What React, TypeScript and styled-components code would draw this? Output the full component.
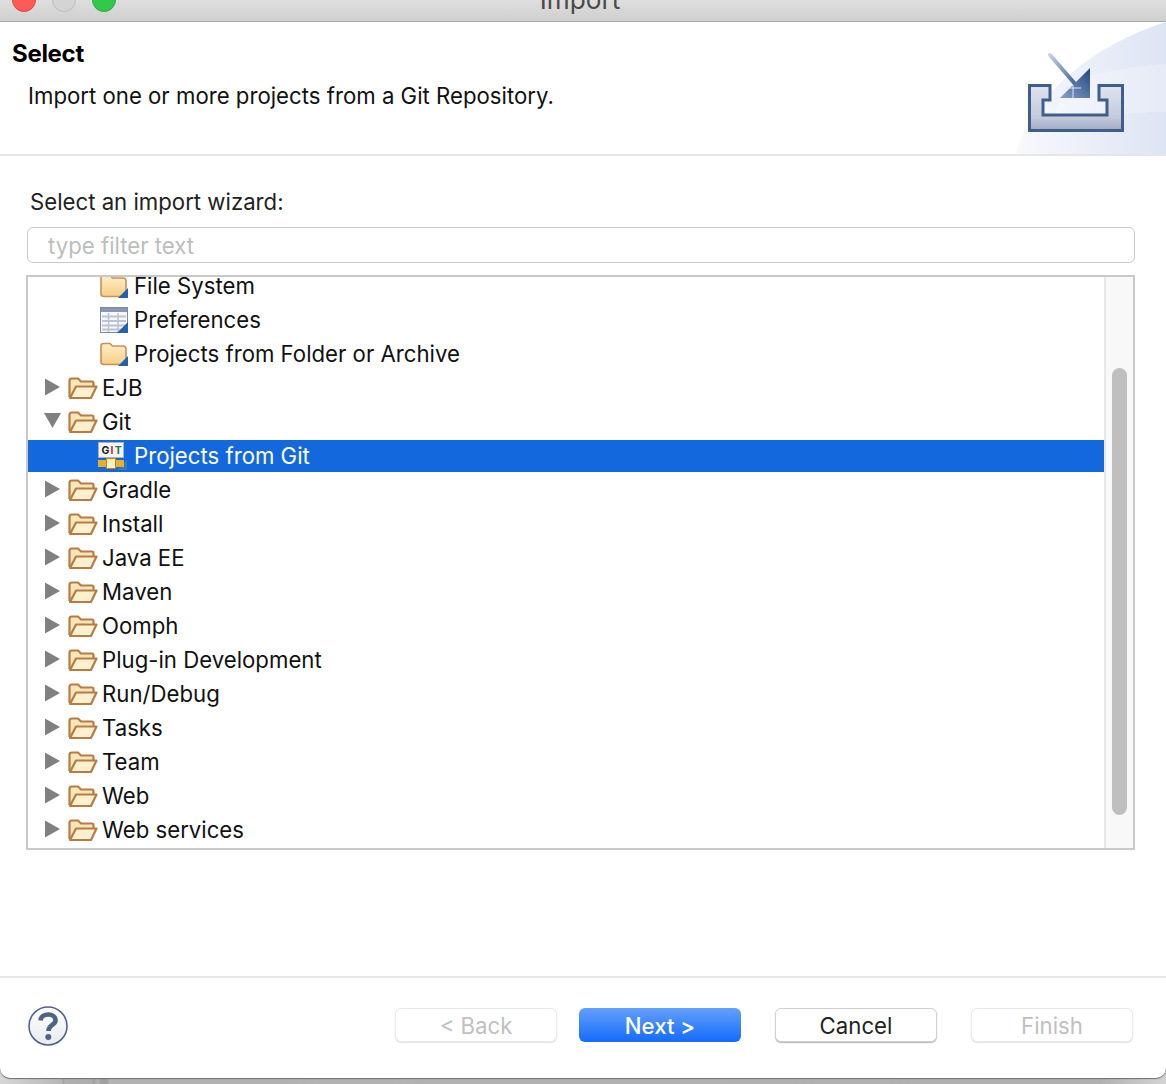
import React from "react";
import styled, { createGlobalStyle } from "styled-components";

const Global = createGlobalStyle`
  html, body { margin: 0; padding: 0; }
  body { font-family: Inter, "Liberation Sans", sans-serif; }
  #root { width: 1166px; height: 1084px; overflow: hidden; }
`;
const Desk = styled.div`
  width: 1166px; height: 1084px; overflow: hidden;
  background: linear-gradient(90deg, #d6d6d6 0, #b6b6b6 62px, #a2a2a2 63px, #b0b0b0 65px, #adadad 92px, #a0a0a0 93px, #b4b4b4 99px, #a0a0a0 100px, #a0a0a0 108px, #b2b2b2 109px, #b0b0b0 1100px, #d4d4d4 1166px);
`;
const Win = styled.div`
  height: 1078px; background: #fff; border-radius: 0 0 10px 10px; overflow: hidden;
  display: flex; flex-direction: column; box-shadow: 0 1px 1px #6e6e6e;
`;
const TitleBar = styled.div`
  flex: none; height: 22px; box-sizing: border-box; overflow: hidden;
  background: linear-gradient(#dedede, #cfcfcf);
  border-bottom: 1px solid #a9a9a9;
  display: grid; grid-template-columns: 1fr auto 1fr; grid-template-rows: 21px; align-items: end;
`;
const Lights = styled.div`
  display: flex; gap: 16px; padding-left: 12px; margin-bottom: 9px;
`;
const Light = styled.span<{ $c: string; $b: string }>`
  width: 24px; height: 24px; border-radius: 50%; box-sizing: border-box;
  background: ${(p) => p.$c}; border: 1px solid ${(p) => p.$b};
`;
const Title = styled.div`
  font-size: 26.2px; line-height: 26px; color: #4a4a4a; margin-bottom: 8px; padding-right: 6px;
`;
const Header = styled.div`
  flex: none; height: 134px; position: relative; overflow: hidden; box-sizing: border-box;
  border-bottom: 2px solid #e6e6e6; padding: 17px 12px 0;
`;
const Banner = styled.svg`
  position: absolute; right: 0; top: 0;
`;
const WizIcon = styled.svg`
  position: absolute; left: 1026px; top: 30px;
`;
const HeadTitle = styled.div`
  font-size: 24px; line-height: 30px; font-weight: 700; color: #000; letter-spacing: -0.3px;
`;
const HeadDesc = styled.div`
  font-size: 22.2px; line-height: 28px; color: #111; margin: 13px 0 0 16px;
`;
const Main = styled.div`
  flex: 1; display: flex; flex-direction: column; padding: 32px 31px 0 27px; min-height: 0;
`;
const Label = styled.div`
  font-size: 22.2px; line-height: 28px; color: #222; padding-left: 3px;
`;
const Filter = styled.input`
  display: block; width: 100%; height: 36px; box-sizing: border-box; margin-top: 11px;
  border: 1px solid #c9c9c9; border-radius: 6px; padding: 0 20px; outline: none;
  font: 22.2px Inter, sans-serif; background: #fff;
  &::placeholder { color: #bdbdbd; opacity: 1; }
`;
const TreeBox = styled.div`
  margin: 12px 0 0 -1px; width: 1109px; height: 575px; box-sizing: border-box;
  border: 2px solid #c9c9c9; display: flex; overflow: hidden;
`;
const TreeList = styled.div`
  flex: 1; min-width: 0; margin-top: -8px;
`;
const Row = styled.div`
  height: 34px; display: flex; align-items: center; box-sizing: border-box;
  font-size: 22.2px; color: #111; padding-bottom: 2px;
`;
const ChildRow = styled(Row)`
  padding-left: 72px;
`;
const SelectedRow = styled(Row)`
  height: 32px; margin: 1px 0; background: #1268dc; padding-left: 70px; color: #fff;
`;
const Twist = styled.svg`
  flex: none; width: 20px; height: 18px; margin: 0 5px 0 15px;
`;
const IconBox = styled.svg<{ $gap: number }>`
  flex: none; margin: 2px ${(p) => p.$gap}px 0 0;
`;
const Track = styled.div`
  flex: none; width: 29px; box-sizing: border-box; background: #f8f8f8;
  border-left: 2px solid #e8e8e8; padding: 91px 6px 0 6px;
`;
const Thumb = styled.div`
  height: 447px; border-radius: 8px; background: #bfbfbf;
`;
const Footer = styled.div`
  flex: none; height: 102px; box-sizing: border-box; border-top: 2px solid #e6e6e6;
  display: flex; align-items: flex-start; padding: 30px 33px 0 28px;
`;
const Help = styled.svg`
  flex: none; margin-right: auto; margin-top: -2px;
`;
const Btn = styled.div<{ $kind: "off" | "main" | "plain"; $gap: number }>`
  flex: none; width: 162px; height: 34px; box-sizing: border-box; margin-left: ${(p) => p.$gap}px;
  border-radius: 6px; display: flex; align-items: center; justify-content: center;
  font-size: 22.2px;
  ${(p) =>
    p.$kind === "main"
      ? "background: linear-gradient(#64a0fb, #146bfb); color: #fff; font-weight: 500;"
      : p.$kind === "plain"
      ? "background: #fff; color: #222; border: 1px solid #d0d0d0; box-shadow: 0 1px 1px #b5b5b5;"
      : "background: #fff; color: #c0c0c0; border: 1px solid #e8e8e8; box-shadow: 0 1px 1px #e4e4e4;"}
`;

const Arrow = ({ open }: { open?: boolean }) => (
  <Twist viewBox="0 0 20 18">
    {open ? <path d="M1 1 H18 L9.5 16 Z" fill="#808080" /> : <path d="M2 0.5 L17 9 L2 17.5 Z" fill="#808080" />}
  </Twist>
);
const OpenFolder = () => (
  <IconBox $gap={4} width="30" height="24" viewBox="0 0 30 24">
    <path d="M1.5 21 V5 Q1.5 2.5 4 2.5 H10 L13 5.5 H24 Q25.5 5.5 25.5 7.5 V10" fill="#fbe6b8" stroke="#b57d44" strokeWidth="2.2" />
    <path d="M2 22 L8 10.5 H28.5 L23 22 Z" fill="#fdf0cf" stroke="#b57d44" strokeWidth="2.2" strokeLinejoin="round" />
  </IconBox>
);
const ClosedFolder = () => (
  <IconBox $gap={6} width="28" height="24" viewBox="0 0 28 24">
    <defs>
      <linearGradient id="cf" x1="0" y1="0" x2="0" y2="1">
        <stop offset="0" stopColor="#fdeec7" />
        <stop offset="1" stopColor="#f6cf85" />
      </linearGradient>
    </defs>
    <path d="M1 20 V4 Q1 1.5 3.5 1.5 H10 L12.5 4 H23 Q26 4 26 7 V20 Q26 22.5 23 22.5 H4 Q1 22.5 1 20 Z" fill="url(#cf)" stroke="#c2925a" strokeWidth="1.6" />
    <path d="M28 14 V24 H18 Z" fill="#1d63ae" />
  </IconBox>
);
const TableIcon = () => (
  <IconBox $gap={6} width="28" height="26" viewBox="0 0 28 26">
    <rect x="0.5" y="0.5" width="27" height="25" fill="#f7f8fb" stroke="#7d88a8" />
    <rect x="1" y="1" width="26" height="4" fill="#8b95b3" />
    <path d="M2 9.5 H26 M2 14 H26 M2 18.5 H26 M2 22.5 H26" stroke="#bcc2d4" strokeWidth="2" />
    <path d="M8.5 6 V25 M18 6 V25" stroke="#bcc2d4" strokeWidth="1.5" />
    <path d="M28 15 V26 H17 Z" fill="#1d63ae" />
  </IconBox>
);
const GitIcon = () => (
  <IconBox $gap={6} width="30" height="28" viewBox="0 0 30 28">
    <rect x="0.5" y="0.5" width="25" height="15" fill="#f3f3f3" stroke="#a9b2c0" />
    <text x="3.5" y="11.5" fontSize="10.5" fontWeight="700" fontFamily="Inter, sans-serif" letterSpacing="1.2">
      <tspan fill="#222">G</tspan><tspan fill="#b5342c">I</tspan><tspan fill="#1f7d3a">T</tspan>
    </text>
    <path d="M29 18 V28 H19 Z" fill="#3d78b8" />
    <rect x="0" y="18" width="26" height="7" fill="#e5ae2c" />
    <rect x="8.5" y="16.5" width="9" height="10" fill="#fbeec0" stroke="#b98a1e" />
  </IconBox>
);

const folders1 = ["EJB"];
const folders2 = ["Gradle", "Install", "Java EE", "Maven", "Oomph", "Plug-in Development", "Run/Debug", "Tasks", "Team", "Web", "Web services"];

const FolderRow = ({ name, open }: { name: string; open?: boolean }) => (
  <Row>
    <Arrow open={open} />
    <OpenFolder />
    {name}
  </Row>
);

export default function App() {
  return (
    <Desk>
      <Global />
      <Win>
        <TitleBar>
          <Lights>
            <Light $c="#fc5b57" $b="#e5443f" />
            <Light $c="#d4d4d4" $b="#bdbdbd" />
            <Light $c="#34c84a" $b="#2dac3f" />
          </Lights>
          <Title>Import</Title>
          <span />
        </TitleBar>
        <Header>
          <Banner width="150" height="133" viewBox="0 0 150 133">
            <defs>
              <linearGradient id="bn" x1="0" y1="0" x2="1" y2="0">
                <stop offset="0" stopColor="#f8f9fd" />
                <stop offset="1" stopColor="#dde4f4" />
              </linearGradient>
            </defs>
            <path d="M0 133 C12 80 70 25 150 0 V133 Z" fill="url(#bn)" />
            <path d="M55 60 C90 48 120 44 150 42 V90 C110 90 70 95 30 105 Z" fill="#fff" opacity="0.25" />
          </Banner>
          <WizIcon width="100" height="82" viewBox="0 0 100 82">
            <defs>
              <linearGradient id="tray" x1="0" y1="0" x2="0" y2="1">
                <stop offset="0" stopColor="#dfe4ee" />
                <stop offset="0.7" stopColor="#c4cbdc" />
                <stop offset="1" stopColor="#9fa9c2" />
              </linearGradient>
              <linearGradient id="tri" x1="0" y1="1" x2="1" y2="0">
                <stop offset="0" stopColor="#86a3cc" />
                <stop offset="1" stopColor="#23477e" />
              </linearGradient>
              <linearGradient id="ar" x1="0" y1="0" x2="1" y2="1">
                <stop offset="0" stopColor="#c3cfe4" />
                <stop offset="1" stopColor="#3f6295" />
              </linearGradient>
            </defs>
            <path d="M3.5 33.5 H24 V48 H17 V63 H81 V48 H73 V33.5 H96.5 V78.5 H3.5 Z" fill="url(#tray)" stroke="#3e5f8c" strokeWidth="3" />
            <path d="M24 3 L50 33" stroke="url(#ar)" strokeWidth="4" strokeLinecap="round" />
            <path d="M64 16 V46 H34 Z" fill="url(#tri)" />
            <path d="M47 33 V46 M41 36 H55" stroke="#dbe6f5" strokeWidth="1" />
          </WizIcon>
          <HeadTitle>Select</HeadTitle>
          <HeadDesc>Import one or more projects from a Git Repository.</HeadDesc>
        </Header>
        <Main>
          <Label>Select an import wizard:</Label>
          <Filter placeholder="type filter text" readOnly />
          <TreeBox>
            <TreeList>
              <ChildRow><ClosedFolder />File System</ChildRow>
              <ChildRow><TableIcon />Preferences</ChildRow>
              <ChildRow><ClosedFolder />Projects from Folder or Archive</ChildRow>
              {folders1.map((f) => <FolderRow key={f} name={f} />)}
              <FolderRow name="Git" open />
              <SelectedRow><GitIcon />Projects from Git</SelectedRow>
              {folders2.map((f) => <FolderRow key={f} name={f} />)}
            </TreeList>
            <Track><Thumb /></Track>
          </TreeBox>
        </Main>
        <Footer>
          <Help width="40" height="40" viewBox="0 0 40 40">
            <defs>
              <linearGradient id="hp" x1="0" y1="0" x2="0" y2="1">
                <stop offset="0" stopColor="#ffffff" />
                <stop offset="1" stopColor="#e8eaee" />
              </linearGradient>
            </defs>
            <circle cx="20" cy="20" r="19" fill="url(#hp)" stroke="#4f6484" strokeWidth="1.6" />
            <path d="M12.5 14.5 C13 6.5 28 6.5 27.5 14.5 C27.2 19.5 20.5 18.5 20.5 25" fill="none" stroke="#4f6484" strokeWidth="4.6" />
            <circle cx="20.3" cy="31" r="3" fill="#4f6484" />
          </Help>
          <Btn $kind="off" $gap={0}>&lt; Back</Btn>
          <Btn $kind="main" $gap={22}>Next &gt;</Btn>
          <Btn $kind="plain" $gap={34}>Cancel</Btn>
          <Btn $kind="off" $gap={34}>Finish</Btn>
        </Footer>
      </Win>
    </Desk>
  );
}
